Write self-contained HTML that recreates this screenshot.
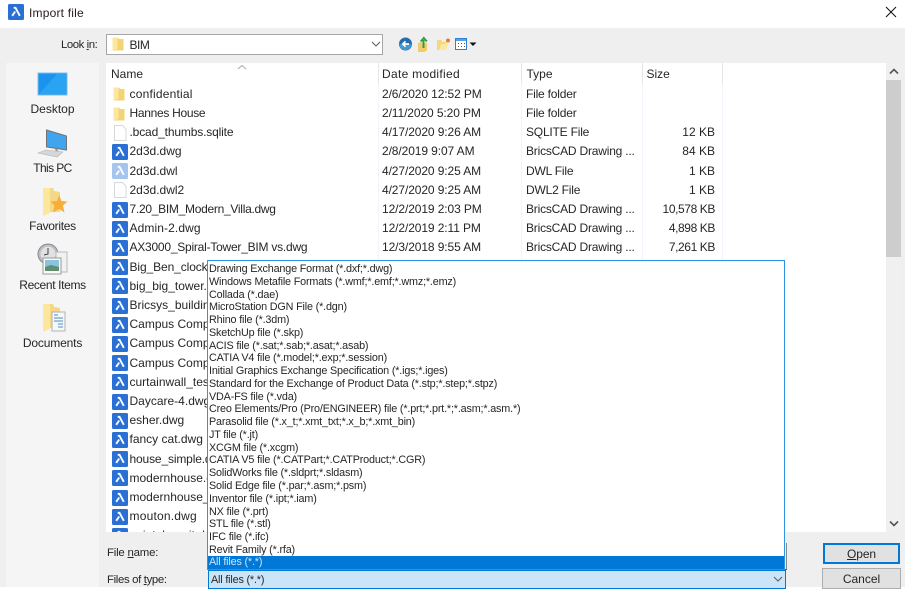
<!DOCTYPE html>
<html><head><meta charset="utf-8"><style>
html,body{margin:0;padding:0;background:#fff;width:905px;height:594px;overflow:hidden}
body{position:relative;font:12px/19px "Liberation Sans",sans-serif;color:#262626;filter:blur(.3px)}
div,svg{position:absolute}
svg{display:block}
.t{white-space:nowrap}
.r{left:0;width:780px;height:19px;white-space:nowrap;margin-top:.4px}
.r svg{left:6px;top:1.5px}
.r b{font-weight:normal;position:absolute;left:23.5px}
.r i{font-style:normal;position:absolute;left:276px;letter-spacing:-.1px}
.r u{text-decoration:none;position:absolute;left:420px;letter-spacing:-.2px}
.r s{text-decoration:none;position:absolute;right:171px}
.side{width:94px;left:5.5px;text-align:center}
.m{padding-top:1px;box-sizing:border-box}
.m div{position:static;height:12.78px;line-height:14.78px;padding-left:1px;white-space:nowrap;font-size:10.8px;letter-spacing:-.17px}
</style></head><body>
<svg width="0" height="0" style="position:absolute">
<symbol id="d" viewBox="0 0 16 16"><rect width="16" height="16" rx="1.5" fill="#2a70d4"/><path d="M5.700 3.800h1.800L11.800 11.800" fill="none" stroke="#fff" stroke-width="1.900"/><path d="M4.200 11.800l3-4.300" fill="none" stroke="#fff" stroke-width="1.900"/></symbol>
<symbol id="l" viewBox="0 0 16 16"><rect width="16" height="16" rx="1.5" fill="#a5c5f1"/><path d="M5.700 3.800h1.800L11.800 11.800" fill="none" stroke="#fff" stroke-width="1.900"/><path d="M4.200 11.800l3-4.300" fill="none" stroke="#fff" stroke-width="1.900"/></symbol>
<symbol id="f" viewBox="0 0 16 16"><path d="M1.500 1.500h5.500l1 1.500h4.500V14.500H1.500z" fill="#f3d475"/><path d="M1.500 1.500h5v11.500l-5 1.500z" fill="#fde7a0"/></symbol>
<symbol id="p" viewBox="0 0 16 16"><path d="M2.500 .5h8l3.500 3.500V15.500h-11.500z" fill="#fff" stroke="#d8d8d8"/></symbol>
</svg>

<!-- title bar -->
<svg style="left:8px;top:4px" width="16" height="16"><use href="#d"/></svg>
<div class="t" style="left:29px;top:4px;color:#2a1a20;letter-spacing:.2px">Import file</div>
<svg style="left:885px;top:6px" width="12" height="12"><path d="M1 1l10 10M11 1L1 11" stroke="#111" stroke-width="1" fill="none"/></svg>

<!-- dialog body -->
<div style="left:0;top:28px;width:905px;height:559px;background:#efefef"></div>
<div style="left:6px;top:63px;width:93px;height:524px;background:#f5f5f5"></div>

<!-- look in -->
<div class="t" style="left:61px;top:36px;font-size:11.400px;letter-spacing:-.45px">Look <span style="text-decoration:underline">i</span>n:</div>
<div style="left:106px;top:34px;width:275px;height:19px;background:#fff;border:1.500px solid #a6a6a6"></div>
<svg style="left:111px;top:36px" width="16" height="16"><use href="#f"/></svg>
<div class="t" style="left:129.500px;top:35.500px;letter-spacing:-.5px">BIM</div>
<svg style="left:371px;top:41px" width="10" height="7"><path d="M1 1l4 4 4-4" fill="none" stroke="#606060" stroke-width="1.100"/></svg>

<!-- toolbar -->
<svg style="left:398px;top:36px" width="85" height="16">
<circle cx="7.500" cy="8" r="6.500" fill="#2a6ba8"/><path d="M1.500 8a6 6 0 0 0 12 0z" fill="#3f9bd6"/><path d="M11 8H5M7.500 5.300L4.800 8l2.700 2.700" fill="none" stroke="#fff" stroke-width="1.700"/>
<path d="M20 7l3-1 1 1h5v7.500l-3 1.500h-6z" fill="#f0cd6a"/><path d="M25.500 12V4M22.800 5.500l3-3.500 3 3.500" fill="none" stroke="#3c9a3c" stroke-width="2"/>
<path d="M39 4h4l1 2h5v1h-1l-2 7H39z" fill="#f4d67e"/><path d="M41 14l2-6h7l-2 6z" fill="#fce7a0"/><circle cx="50" cy="4.500" r="2" fill="#ee7a3b"/>
<rect x="57.500" y="2.500" width="11" height="11" fill="#fff" stroke="#2f7fd2"/><rect x="58" y="3" width="10" height="2" fill="#5a9fe0"/><path d="M60 7h1v1h-1zM63 7h1v1h-1zM66 7h1v1h-1zM60 10h1v1h-1zM63 10h1v1h-1zM66 10h1v1h-1z" fill="#555"/>
<path d="M71.500 6.500h7l-3.500 3.500z" fill="#111"/>
</svg>

<!-- sidebar -->
<svg style="left:37px;top:72px" width="31" height="25"><rect x="1" y="1" width="29" height="22" fill="#1a93ee" stroke="#7cc0ee"/><path d="M2 22L20 2h9v20z" fill="#2ba3f3"/></svg>
<div class="side" style="top:99.500px">Desktop</div>
<svg style="left:37px;top:129px" width="31" height="30"><path d="M9.500 1l20 6v14l-20-3z" fill="#40a4ef" stroke="#737373"/><path d="M18 20l1 3h3l-2-3z" fill="#999"/><path d="M1 24l8-3 17 2-6 5z" fill="#d6d6d6" stroke="#b5b5b5" stroke-width=".6"/></svg>
<div class="side" style="top:158.500px;letter-spacing:-.6px">This PC</div>
<svg style="left:41px;top:187px" width="28" height="30"><path d="M2 1h10l1 3 6 1v20H2z" fill="#f5d885"/><path d="M2 1h7v25l-7 3z" fill="#fde79c"/><path d="M18 8l2.500 6 6 .5-4.500 4 1.500 7-5.500-3.500-6 3.500 1.500-7-4-4 6.500-.5z" fill="#f6b03a"/></svg>
<div class="side" style="top:216.500px;letter-spacing:-.3px">Favorites</div>
<svg style="left:37px;top:243px" width="31" height="32"><circle cx="11" cy="11" r="10" fill="#b9bcc0" stroke="#8a8a8a"/><circle cx="11" cy="11" r="7.500" fill="#dfe1e3"/><path d="M11 5v6l-4 1" fill="none" stroke="#444"/><rect x="19" y="9" width="11" height="20" fill="#f1f1f1" stroke="#bbb"/><rect x="6" y="15" width="18" height="16" fill="#fafafa" stroke="#999"/><rect x="8" y="17" width="14" height="11" fill="#8cc3dc"/><path d="M8 24l6-2 8 2v4H8z" fill="#5f8f70"/></svg>
<div class="side" style="top:275.500px;letter-spacing:-.35px">Recent Items</div>
<svg style="left:41px;top:303px" width="26" height="30"><path d="M2 1h10l1 3 6 1v20H2z" fill="#f5d885"/><path d="M2 1h7v25l-7 3z" fill="#fde79c"/><rect x="11" y="9" width="13" height="19" fill="#f7f7f7" stroke="#b3b3b3"/><path d="M13 12h4M13 15h9M13 18h9M17 21h5M17 24h5" stroke="#4c8fc7"/></svg>
<div class="side" style="top:333.500px;letter-spacing:-.15px">Documents</div>

<!-- list -->
<div style="left:106px;top:63px;width:780px;height:469px;background:#fff;overflow:hidden">
<div style="left:271.500px;top:0;width:1px;height:20px;background:#e5e5e5"></div>
<div style="left:415px;top:0;width:1px;height:20px;background:#e5e5e5"></div>
<div style="left:535.500px;top:0;width:1px;height:20px;background:#e5e5e5"></div>
<div style="left:615.500px;top:0;width:1px;height:20px;background:#e5e5e5"></div>
<div style="left:271.500px;top:20px;width:1px;height:449px;background:#f0f5fc"></div>
<div style="left:415px;top:20px;width:1px;height:449px;background:#f0f5fc"></div>
<div style="left:535.500px;top:20px;width:1px;height:449px;background:#f0f5fc"></div>
<div style="left:615.500px;top:20px;width:1px;height:449px;background:#f0f5fc"></div>
<svg style="left:131px;top:1px" width="10" height="6"><path d="M1 5l4-3.500L9 5" fill="none" stroke="#a8a8a8"/></svg>
<div class="t" style="left:5px;top:1.500px">Name</div>
<div class="t" style="left:276px;top:1.500px;letter-spacing:.3px">Date modified</div>
<div class="t" style="left:420.500px;top:1.500px">Type</div>
<div class="t" style="left:540.500px;top:1.500px">Size</div>

<div class="r" style="top:21.500px"><svg width="16" height="16"><use href="#f"/></svg><b style="letter-spacing:.2px">confidential</b><i>2/6/2020 12:52 PM</i><u>File folder</u></div>
<div class="r" style="top:40.700px"><svg width="16" height="16"><use href="#f"/></svg><b style="letter-spacing:-.3px">Hannes House</b><i>2/11/2020 5:20 PM</i><u>File folder</u></div>
<div class="r" style="top:59.900px"><svg width="16" height="16"><use href="#p"/></svg><b style="letter-spacing:-.15px">.bcad_thumbs.sqlite</b><i>4/17/2020 9:26 AM</i><u>SQLITE File</u><s>12 KB</s></div>
<div class="r" style="top:79.100px"><svg width="16" height="16"><use href="#d"/></svg><b>2d3d.dwg</b><i>2/8/2019 9:07 AM</i><u>BricsCAD Drawing ...</u><s>84 KB</s></div>
<div class="r" style="top:98.300px"><svg width="16" height="16"><use href="#l"/></svg><b>2d3d.dwl</b><i>4/27/2020 9:25 AM</i><u>DWL File</u><s>1 KB</s></div>
<div class="r" style="top:117.500px"><svg width="16" height="16"><use href="#p"/></svg><b>2d3d.dwl2</b><i>4/27/2020 9:25 AM</i><u>DWL2 File</u><s>1 KB</s></div>
<div class="r" style="top:136.700px"><svg width="16" height="16"><use href="#d"/></svg><b style="letter-spacing:-.28px">7.20_BIM_Modern_Villa.dwg</b><i>12/2/2019 2:03 PM</i><u>BricsCAD Drawing ...</u><s style="letter-spacing:-.4px">10,578 KB</s></div>
<div class="r" style="top:155.900px"><svg width="16" height="16"><use href="#d"/></svg><b style="letter-spacing:.1px">Admin-2.dwg</b><i>12/2/2019 2:11 PM</i><u>BricsCAD Drawing ...</u><s style="letter-spacing:-.4px">4,898 KB</s></div>
<div class="r" style="top:175.100px"><svg width="16" height="16"><use href="#d"/></svg><b style="letter-spacing:-.23px">AX3000_Spiral-Tower_BIM vs.dwg</b><i>12/3/2018 9:55 AM</i><u>BricsCAD Drawing ...</u><s style="letter-spacing:-.4px">7,261 KB</s></div>
<div class="r" style="top:194.300px"><svg width="16" height="16"><use href="#d"/></svg><b style="letter-spacing:-.1px">Big_Ben_clock.dwg</b></div>
<div class="r" style="top:213.500px"><svg width="16" height="16"><use href="#d"/></svg><b>big_big_tower.dwg</b></div>
<div class="r" style="top:232.700px"><svg width="16" height="16"><use href="#d"/></svg><b>Bricsys_building.dwg</b></div>
<div class="r" style="top:251.900px"><svg width="16" height="16"><use href="#d"/></svg><b>Campus Complex</b></div>
<div class="r" style="top:271.100px"><svg width="16" height="16"><use href="#d"/></svg><b>Campus Complex</b></div>
<div class="r" style="top:290.300px"><svg width="16" height="16"><use href="#d"/></svg><b>Campus Complex</b></div>
<div class="r" style="top:309.500px"><svg width="16" height="16"><use href="#d"/></svg><b>curtainwall_test.dwg</b></div>
<div class="r" style="top:328.700px"><svg width="16" height="16"><use href="#d"/></svg><b>Daycare-4.dwg</b></div>
<div class="r" style="top:347.900px"><svg width="16" height="16"><use href="#d"/></svg><b>esher.dwg</b></div>
<div class="r" style="top:367.100px"><svg width="16" height="16"><use href="#d"/></svg><b>fancy cat.dwg</b></div>
<div class="r" style="top:386.300px"><svg width="16" height="16"><use href="#d"/></svg><b style="letter-spacing:-.15px">house_simple.dwg</b></div>
<div class="r" style="top:405.500px"><svg width="16" height="16"><use href="#d"/></svg><b>modernhouse.dwg</b></div>
<div class="r" style="top:424.700px"><svg width="16" height="16"><use href="#d"/></svg><b>modernhouse_2.dwg</b></div>
<div class="r" style="top:443.900px"><svg width="16" height="16"><use href="#d"/></svg><b style="letter-spacing:.2px">mouton.dwg</b></div>
<div class="r" style="top:463.100px"><svg width="16" height="16"><use href="#d"/></svg><b>point_benoit.dwg</b></div>
</div>

<!-- scrollbar -->
<div style="left:886px;top:63px;width:15px;height:469px;background:#f0f0f0"></div>
<div style="left:886px;top:80px;width:15px;height:177px;background:#cdcdcd"></div>
<svg style="left:889px;top:68px" width="10" height="7"><path d="M1 5.500l4-4 4 4" fill="none" stroke="#555" stroke-width="1.600"/></svg>
<svg style="left:889px;top:520px" width="10" height="7"><path d="M1 1.500l4 4 4-4" fill="none" stroke="#555" stroke-width="1.600"/></svg>

<!-- bottom -->
<div class="t" style="left:107px;top:544px;font-size:11.400px;letter-spacing:-.2px">File <span style="text-decoration:underline">n</span>ame:</div>
<div class="t" style="left:107px;top:571px;font-size:11.400px;letter-spacing:-.35px">Files of <span style="text-decoration:underline">t</span>ype:</div>
<div class="t" style="left:823px;top:543px;width:73px;height:17px;background:#e1e1e1;border:2px solid #0078d7;text-align:center;line-height:18px;letter-spacing:-.1px"><span style="text-decoration:underline">O</span>pen</div>
<div class="t" style="left:822px;top:568px;width:77px;height:19px;background:#e1e1e1;border:1px solid #adadad;text-align:center;line-height:20px">Cancel</div>

<!-- combo -->
<div style="left:208px;top:570px;width:576px;height:17px;background:#cce4f7;border:1px solid #0078d7"></div>
<div class="t" style="left:211px;top:571px;font-size:10.800px;letter-spacing:-.17px">All files (*.*)</div>
<svg style="left:773px;top:576px" width="10" height="7"><path d="M1 1l4 4 4-4" fill="none" stroke="#606060" stroke-width="1.100"/></svg>

<!-- popup -->
<div style="left:786px;top:543px;width:1px;height:27px;background:#8a8a8a"></div>
<div style="left:207px;top:569px;width:580px;height:1px;background:#555"></div>
<div class="m" style="left:207px;top:260px;width:578px;height:310px;background:#fff;border:1px solid #2b95e8;overflow:hidden">
<div>Drawing Exchange Format (*.dxf;*.dwg)</div>
<div>Windows Metafile Formats (*.wmf;*.emf;*.wmz;*.emz)</div>
<div>Collada (*.dae)</div>
<div>MicroStation DGN File (*.dgn)</div>
<div>Rhino file (*.3dm)</div>
<div>SketchUp file (*.skp)</div>
<div>ACIS file (*.sat;*.sab;*.asat;*.asab)</div>
<div>CATIA V4 file (*.model;*.exp;*.session)</div>
<div>Initial Graphics Exchange Specification (*.igs;*.iges)</div>
<div>Standard for the Exchange of Product Data (*.stp;*.step;*.stpz)</div>
<div>VDA-FS file (*.vda)</div>
<div>Creo Elements/Pro (Pro/ENGINEER) file (*.prt;*.prt.*;*.asm;*.asm.*)</div>
<div>Parasolid file (*.x_t;*.xmt_txt;*.x_b;*.xmt_bin)</div>
<div>JT file (*.jt)</div>
<div>XCGM file (*.xcgm)</div>
<div>CATIA V5 file (*.CATPart;*.CATProduct;*.CGR)</div>
<div>SolidWorks file (*.sldprt;*.sldasm)</div>
<div>Solid Edge file (*.par;*.asm;*.psm)</div>
<div>Inventor file (*.ipt;*.iam)</div>
<div>NX file (*.prt)</div>
<div>STL file (*.stl)</div>
<div>IFC file (*.ifc)</div>
<div>Revit Family (*.rfa)</div>
<div style="background:#0078d7;color:#cfe4f7;height:14px;line-height:12.780px">All files (*.*)</div>
</div>
</body></html>
